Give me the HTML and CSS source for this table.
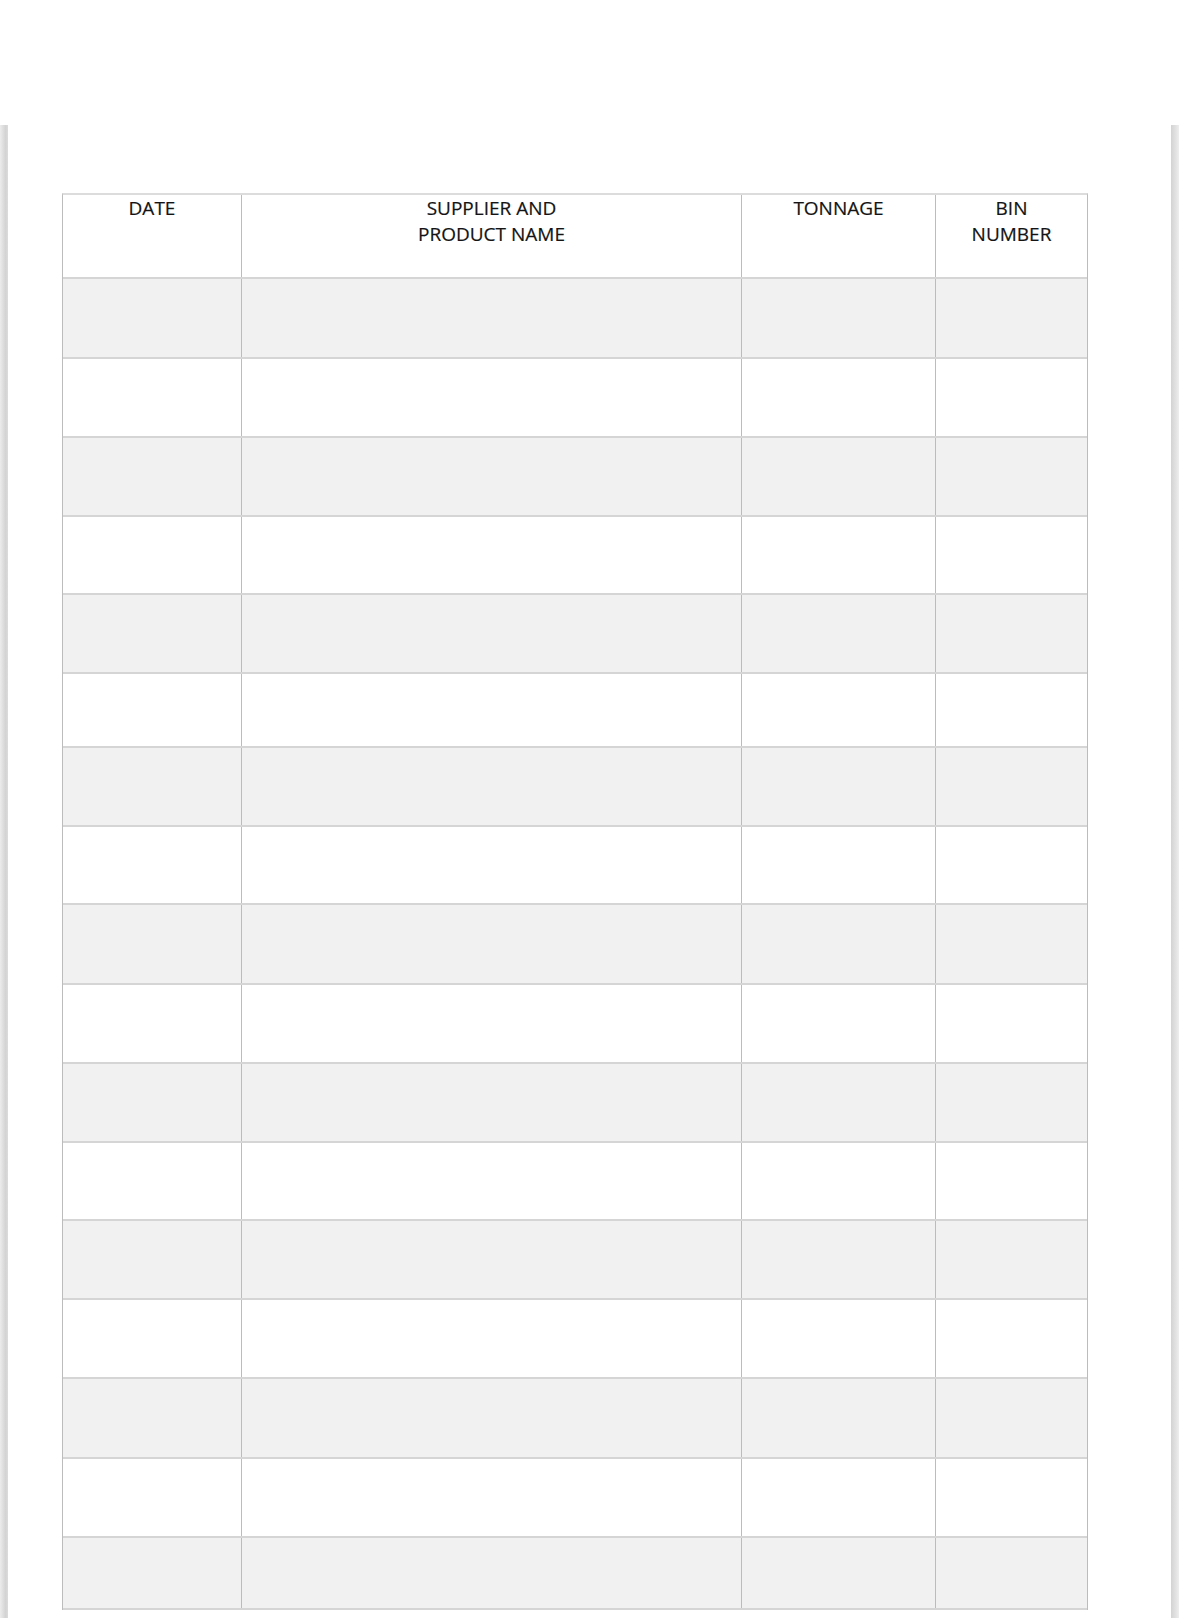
FILE: index.html
```html
<!DOCTYPE html>
<html lang="en">
<head>
<meta charset="utf-8">
<title>Bin Log</title>
<link rel="stylesheet" href="styles.css">
</head>
<body>
<div class="topbar"></div>
<div class="page">
  <div class="sheet">
    <div class="log">
      <div class="row head">
        <div class="cell">DATE</div>
        <div class="cell">SUPPLIER AND<br>PRODUCT NAME</div>
        <div class="cell">TONNAGE</div>
        <div class="cell">BIN<br>NUMBER</div>
      </div>
      <div class="row shade h80"><div class="cell"></div><div class="cell"></div><div class="cell"></div><div class="cell"></div></div>
      <div class="row"><div class="cell"></div><div class="cell"></div><div class="cell"></div><div class="cell"></div></div>
      <div class="row shade"><div class="cell"></div><div class="cell"></div><div class="cell"></div><div class="cell"></div></div>
      <div class="row h78"><div class="cell"></div><div class="cell"></div><div class="cell"></div><div class="cell"></div></div>
      <div class="row shade"><div class="cell"></div><div class="cell"></div><div class="cell"></div><div class="cell"></div></div>
      <div class="row h74"><div class="cell"></div><div class="cell"></div><div class="cell"></div><div class="cell"></div></div>
      <div class="row shade"><div class="cell"></div><div class="cell"></div><div class="cell"></div><div class="cell"></div></div>
      <div class="row h78"><div class="cell"></div><div class="cell"></div><div class="cell"></div><div class="cell"></div></div>
      <div class="row shade h80"><div class="cell"></div><div class="cell"></div><div class="cell"></div><div class="cell"></div></div>
      <div class="row"><div class="cell"></div><div class="cell"></div><div class="cell"></div><div class="cell"></div></div>
      <div class="row shade"><div class="cell"></div><div class="cell"></div><div class="cell"></div><div class="cell"></div></div>
      <div class="row h78"><div class="cell"></div><div class="cell"></div><div class="cell"></div><div class="cell"></div></div>
      <div class="row shade"><div class="cell"></div><div class="cell"></div><div class="cell"></div><div class="cell"></div></div>
      <div class="row"><div class="cell"></div><div class="cell"></div><div class="cell"></div><div class="cell"></div></div>
      <div class="row shade h80"><div class="cell"></div><div class="cell"></div><div class="cell"></div><div class="cell"></div></div>
      <div class="row"><div class="cell"></div><div class="cell"></div><div class="cell"></div><div class="cell"></div></div>
      <div class="row shade h72"><div class="cell"></div><div class="cell"></div><div class="cell"></div><div class="cell"></div></div>
    </div>
  </div>
</div>
</body>
</html>
```

FILE: styles.css
```css
html, body {
  margin: 0;
  padding: 0;
  background: #ffffff;
}

body {
  width: 1179px;
  height: 1618px;
  overflow: hidden;
  font-family: "Open Sans", "DejaVu Sans", sans-serif;
  color: #141414;
}

.topbar {
  height: 125px;
  background: #ffffff;
}

.page {
  display: flex;
  height: 1493px;
}

.page::before,
.page::after {
  content: "";
  width: 8px;
  flex: none;
}

.page::before {
  background: linear-gradient(to right, #ececec, #d3d3d3 70%, #dcdcdc);
}

.page::after {
  background: linear-gradient(to right, #d3d3d3, #e2e2e2 60%, #eeeeee);
}

.sheet {
  flex: 1;
  background: #ffffff;
  padding: 68px 0 0 54px;
}

.log {
  width: 1026px;
  box-sizing: border-box;
  border-top: 2px solid #dcdcdc;
  border-left: 1px solid #bcbcbc;
  border-right: 1px solid #bcbcbc;
}

.row {
  display: grid;
  grid-template-columns: 179px 500px 194px 151px;
  height: 79px;
  box-sizing: border-box;
  border-bottom: 2px solid #d5d5d5;
  background: #ffffff;
}

.row.shade {
  background: #f1f1f1;
}

.row.h80 { height: 80px; }
.row.h78 { height: 78px; }
.row.h74 { height: 74px; }
.row.h72 { height: 72px; }

.row.head {
  height: 84px;
}

.cell {
  border-right: 1px solid #bcbcbc;
}

.cell:last-child {
  border-right: none;
}

.head .cell {
  text-align: center;
  font-size: 19px;
  line-height: 26px;
  padding-top: 0;
  -webkit-text-stroke: 0.2px #141414;
}
```
